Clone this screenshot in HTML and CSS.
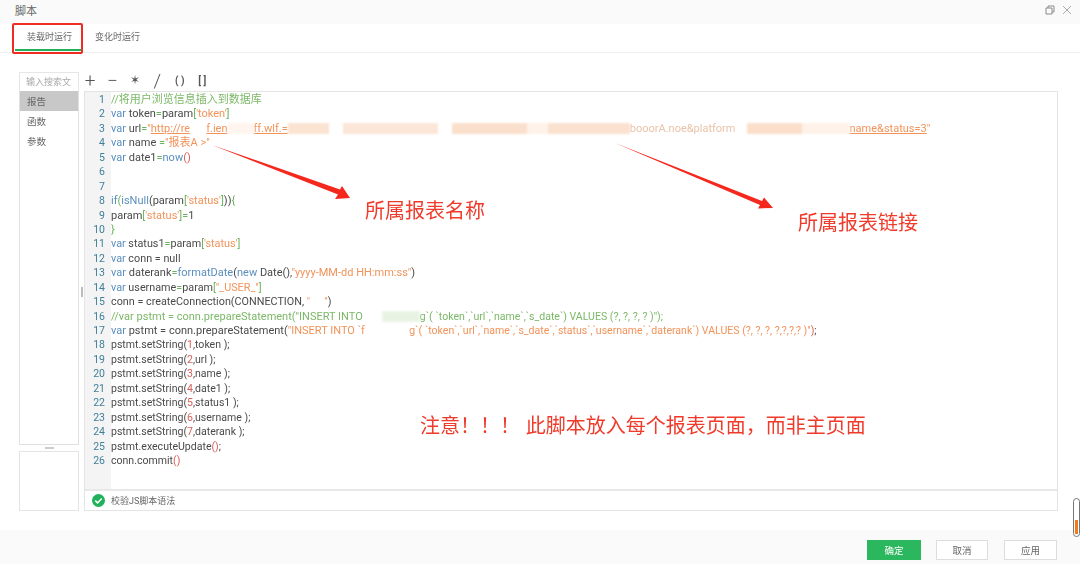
FILE: index.html
```html
<!DOCTYPE html>
<html lang="zh">
<head>
<meta charset="utf-8">
<title>脚本</title>
<link rel="stylesheet" href="styles.css">
</head>
<body>
<div class="dialog">
  <header class="titlebar">
    <span class="title">脚本</span>
    <span class="win-icons">
      <svg width="10" height="10" viewBox="0 0 10 10"><path d="M1 3h6v6H1zM3 3V1h6v6H7" fill="none" stroke="#8a8a8a"/></svg>
      <svg width="10" height="10" viewBox="0 0 10 10"><path d="M1 1l8 8M9 1L1 9" fill="none" stroke="#aaa"/></svg>
    </span>
  </header>
  <nav class="tabs">
    <span class="tab tab-active">装载时运行</span>
    <span class="tab">变化时运行</span>
  </nav>
  <main class="body">
    <aside class="side">
      <div class="search">输入搜索文</div>
      <ul class="list">
        <li class="item item-active">报告</li>
        <li class="item">函数</li>
        <li class="item">参数</li>
      </ul>
      <div class="handle-row"><span class="handle"></span></div>
      <div class="preview"></div>
    </aside>
    <div class="splitter"><span class="grip"></span></div>
    <section class="work">
      <div class="ops"><span>+</span><span>−</span><span class="op-star">✶</span><span>/</span><span class="op-sm">( )</span><span class="op-sm">[ ]</span></div>
      <div class="editor">
        <div class="code-wrap">
          <div class="gutter">
            <div>1</div><div>2</div><div>3</div><div>4</div><div>5</div><div>6</div><div>7</div><div>8</div><div>9</div><div>10</div><div>11</div><div>12</div><div>13</div><div>14</div><div>15</div><div>16</div><div>17</div><div>18</div><div>19</div><div>20</div><div>21</div><div>22</div><div>23</div><div>24</div><div>25</div><div>26</div>
          </div>
          <div class="code">
            <div class="c">//将用户浏览信息插入到数据库</div>
            <div><b>var</b> token<i>=</i>param<i>[</i><s>'token'</s><i>]</i></div>
            <div><b>var</b> url<i>=</i><s>"<u>http://re</u><span class="m m1"></span><u>f.ien</u><span class="m m2"></span><u>ff.wlf.=</u><span class="m m3"></span><span class="faint">booorA.noe&amp;platform</span><span class="m m6"></span><u>name&amp;status=3</u>"</s></div>
            <div><b>var</b> name <i>=</i><s>"报表A &gt;"</s></div>
            <div><b>var</b> date1<i>=</i><em>now</em><r>()</r></div>
            <div>&nbsp;</div>
            <div>&nbsp;</div>
            <div><b>if</b><i>(</i><em>isNull</em>(param<i>[</i><s>'status'</s><i>]</i>))<i>{</i></div>
            <div>param<i>[</i><s>'status'</s><i>]</i><i>=</i>1</div>
            <div><i>}</i></div>
            <div class="mid"><b>var</b> status1<i>=</i>param<i>[</i><s>'status'</s><i>]</i></div>
            <div class="mid"><b>var</b> conn = null</div>
            <div><b>var</b> daterank<i>=</i><em>formatDate</em>(<b>new</b> Date(),<s>"yyyy-MM-dd HH:mm:ss"</s>)</div>
            <div class="mid"><b>var</b> username<i>=</i>param<i>[</i><s>"_USER_"</s><i>]</i></div>
            <div class="mid">conn = createConnection(CONNECTION, <s>"<span class="m m7"></span>"</s>)</div>
            <div class="c">//var pstmt = conn.prepareStatement("INSERT INTO <span class="m m8"></span>g`( <span class="tight">`token`,`url`,`name`,`s_date`) VALUES (?, ?, ?, ? )");</span></div>
            <div><b>var</b> pstmt = conn.prepareStatement(<s>"INSERT INTO `f<span class="m m9"></span>g`( <span class="tight">`token`,`url`,`name`,`s_date`,`status`,`username`,`daterank`) VALUES (?, ?, ?, ?,?,?,? )"</span></s><r class="tight">)</r><span class="tight">;</span></div>
            <div class="tight">pstmt.setString(<r>1</r>,token );</div>
            <div class="tight">pstmt.setString(<r>2</r>,url );</div>
            <div class="tight">pstmt.setString(<r>3</r>,name );</div>
            <div class="tight">pstmt.setString(<r>4</r>,date1 );</div>
            <div class="tight">pstmt.setString(<r>5</r>,status1 );</div>
            <div class="tight">pstmt.setString(<r>6</r>,username );</div>
            <div class="tight">pstmt.setString(<r>7</r>,daterank );</div>
            <div class="tight">pstmt.executeUpdate<r>()</r>;</div>
            <div class="tight">conn.commit<r>()</r></div>
          </div>
        </div>
        <div class="check">
          <svg width="13" height="13" viewBox="0 0 13 13"><circle cx="6.5" cy="6.5" r="6.5" fill="#20b15a"/><path d="M3.3 6.6l2.3 2.3 4.1-4.3" fill="none" stroke="#fff" stroke-width="1.5"/></svg>
          <span>校验JS脚本语法</span>
        </div>
      </div>
    </section>
  </main>
  <footer class="foot">
    <button class="btn btn-ok">确定</button>
    <button class="btn btn-cancel">取消</button>
    <button class="btn btn-apply">应用</button>
  </footer>
</div>

<div class="tab-mark"></div>
<svg class="arrows" width="1080" height="564" viewBox="0 0 1080 564">
  <path d="M212 145L340 189.5L342 186L350 198L335 199L338 194.5Z" fill="#f5281e"/>
  <path d="M615 143L762 201L764 197.5L773 208L758 208.5L760 205Z" fill="#f5281e"/>
</svg>
<div class="note note-name">所属报表名称</div>
<div class="note note-link">所属报表链接</div>
<div class="note note-warn">注意！！！&nbsp;&#8202;此脚本放入每个报表页面，而非主页面</div>
<div class="scroll-thumb"><span class="scroll-fill"></span></div>
</body>
</html>
```
FILE: styles.css
```css
* { box-sizing: border-box; }
html, body { margin: 0; padding: 0; }
body {
  width: 1080px;
  height: 564px;
  overflow: hidden;
  background: #fff;
  position: relative;
  font-family: Roboto, "Noto Sans CJK SC", sans-serif;
  color: #555;
}
.dialog {
  width: 1080px;
  height: 564px;
  display: flex;
  flex-direction: column;
  filter: blur(0.35px);
}
.titlebar {
  height: 24px;
  background: #fafafa;
  display: flex;
  align-items: center;
  justify-content: space-between;
  padding: 0 8px 4px 15px;
  flex: none;
}
.title { font-size: 11px; color: #666; }
.win-icons { display: flex; gap: 7px; }
.tabs {
  height: 29px;
  flex: none;
  display: flex;
  border-bottom: 1px solid #eee;
  padding-left: 15px;
  gap: 2px;
}
.tab {
  width: 66px;
  height: 27px;
  font-size: 9px;
  line-height: 26px;
  padding-left: 3px;
  text-align: center;
  color: #666;
}
.tab-active { border-bottom: 2px solid #20b15a; }
.body {
  flex: 1;
  display: flex;
  padding: 19px 22px 19px 19px;
  min-height: 0;
}
.side {
  width: 60px;
  flex: none;
  display: flex;
  flex-direction: column;
}
.search {
  height: 19px;
  border: 1px solid #e6e6e6;
  border-bottom: 0;
  font-size: 9px;
  line-height: 19px;
  padding-left: 6px;
  color: #aaa;
  white-space: nowrap;
  overflow: hidden;
}
.list {
  list-style: none;
  margin: 0;
  padding: 0;
  flex: 1;
  border: 1px solid #e0e0e0;
  border-top: 0;
}
.item {
  height: 20px;
  font-size: 9.5px;
  line-height: 22px;
  padding-left: 7px;
  color: #666;
  overflow: hidden;
}
.item-active { background: #c8c8c8; }
.handle-row {
  height: 6px;
  display: flex;
  align-items: center;
  justify-content: center;
}
.handle { width: 9px; height: 2px; background: #ccc; }
.preview { height: 60px; border: 1px solid #e4e4e4; flex: none; }
.splitter {
  width: 5px;
  flex: none;
  display: flex;
  align-items: center;
}
.grip { width: 2px; height: 10px; background: #bbb; margin-left: 2px; }
.work {
  flex: 1;
  min-width: 0;
  display: flex;
  flex-direction: column;
}
.ops {
  height: 19px;
  flex: none;
  display: flex;
  align-items: center;
  margin-left: -5px;
  padding-bottom: 2px;
  font-size: 19px;
  font-weight: 300;
  line-height: 17px;
  color: #555;
}
.ops span { width: 22.4px; text-align: center; }
.ops .op-star { font-family: "DejaVu Sans", sans-serif; font-size: 12px; font-weight: 400; }
.ops .op-sm { font-size: 10px; font-weight: 700; }
.editor {
  flex: 1;
  min-height: 0;
  border: 1px solid #e4e4e4;
  display: flex;
  flex-direction: column;
}
.code-wrap { flex: 1; display: flex; min-height: 0; }
.gutter {
  width: 26px;
  flex: none;
  background: #f4f4f4;
  font-size: 10.5px;
  line-height: 14.44px;
  color: #3f7f99;
  text-align: right;
  padding: 1px 6px 0 0;
}
.code {
  flex: 1;
  font-size: 11px;
  line-height: 14.44px;
  color: #4a4a4a;
  padding: 1px 0 0 0;
  white-space: nowrap;
  overflow: hidden;
}
.code > div { height: 14.44px; }
.code .mid { font-size: 10.8px; }
.code .tight { font-size: 10.55px; }
.code b { font-weight: 400; color: #5a8fbe; }
.code i { font-style: normal; color: #6cb35f; }
.code s { text-decoration: none; color: #f2935a; }
.code u { text-decoration: underline; }
.code em { font-style: normal; color: #5a8fbe; }
.code r { color: #d9605a; }
.code .c, .code .c * { color: #7cb868; }
.code .faint { color: #e9c3a8; }
.m {
  display: inline-block;
  height: 11px;
  filter: blur(1.2px);
  vertical-align: -2px;
}
.m1 { background: #fff; width: 16px; }
.m2 { background: #fff5ee; width: 26px; }
.m3 { background: linear-gradient(90deg, #fbe3d2 0 12%, #fff 12% 16%, #fce6d7 16% 44%, #fff 44% 48%, #fadfcc 48% 70%, #fff2e9 70% 76%, #fbe1cf 76%); width: 342px; }
.m6 { background: linear-gradient(90deg, #fff 0 10%, #fbdfcb 10% 58%, #fff2e9 58%); width: 114px; }
.m7 { background: #fff; width: 14px; }
.m8 { background: linear-gradient(90deg, #fff 0 30%, #e9f3e3 30%); width: 54px; }
.m9 { background: #fff; width: 44px; }
.check {
  height: 21px;
  flex: none;
  border-top: 2px solid #e8e8e8;
  display: flex;
  align-items: center;
  gap: 6px;
  padding-left: 7px;
  font-size: 9px;
  color: #666;
  background: #fff;
}
.foot {
  height: 34px;
  flex: none;
  background: #fafafa;
  display: flex;
  justify-content: flex-end;
  align-items: center;
  padding: 6px 23px 0 0;
}
.btn {
  height: 20px;
  font-family: inherit;
  font-size: 9.5px;
  padding: 0;
  border: 1px solid #ddd;
  background: #fff;
  color: #666;
}
.btn-ok { width: 54px; background: #2bb75d; border-color: #2bb75d; color: #fff; margin-right: 15px; }
.btn-cancel { width: 52px; margin-right: 16px; }
.btn-apply { width: 53px; }

.tab-mark {
  position: absolute;
  left: 12px;
  top: 23px;
  width: 71px;
  height: 31px;
  border: 2px solid #ef2b22;
  border-radius: 2px;
}
.arrows { position: absolute; left: 0; top: 0; pointer-events: none; }
.note {
  position: absolute;
  font-size: 20px;
  line-height: 24px;
  color: #ef3b2b;
  white-space: nowrap;
  font-family: "Noto Sans CJK SC", sans-serif;
}
.note-name { left: 365px; top: 198px; }
.note-link { left: 798px; top: 210px; }
.note-warn { left: 420px; top: 413px; }
.scroll-thumb {
  position: absolute;
  left: 1073px;
  top: 498px;
  width: 7px;
  height: 39px;
  border: 1px solid #777;
  border-radius: 4px;
  background: #fff;
  display: flex;
  align-items: flex-end;
  justify-content: center;
  padding-bottom: 2px;
}
.scroll-fill { width: 3px; height: 14px; background: #f07a1e; }
```
